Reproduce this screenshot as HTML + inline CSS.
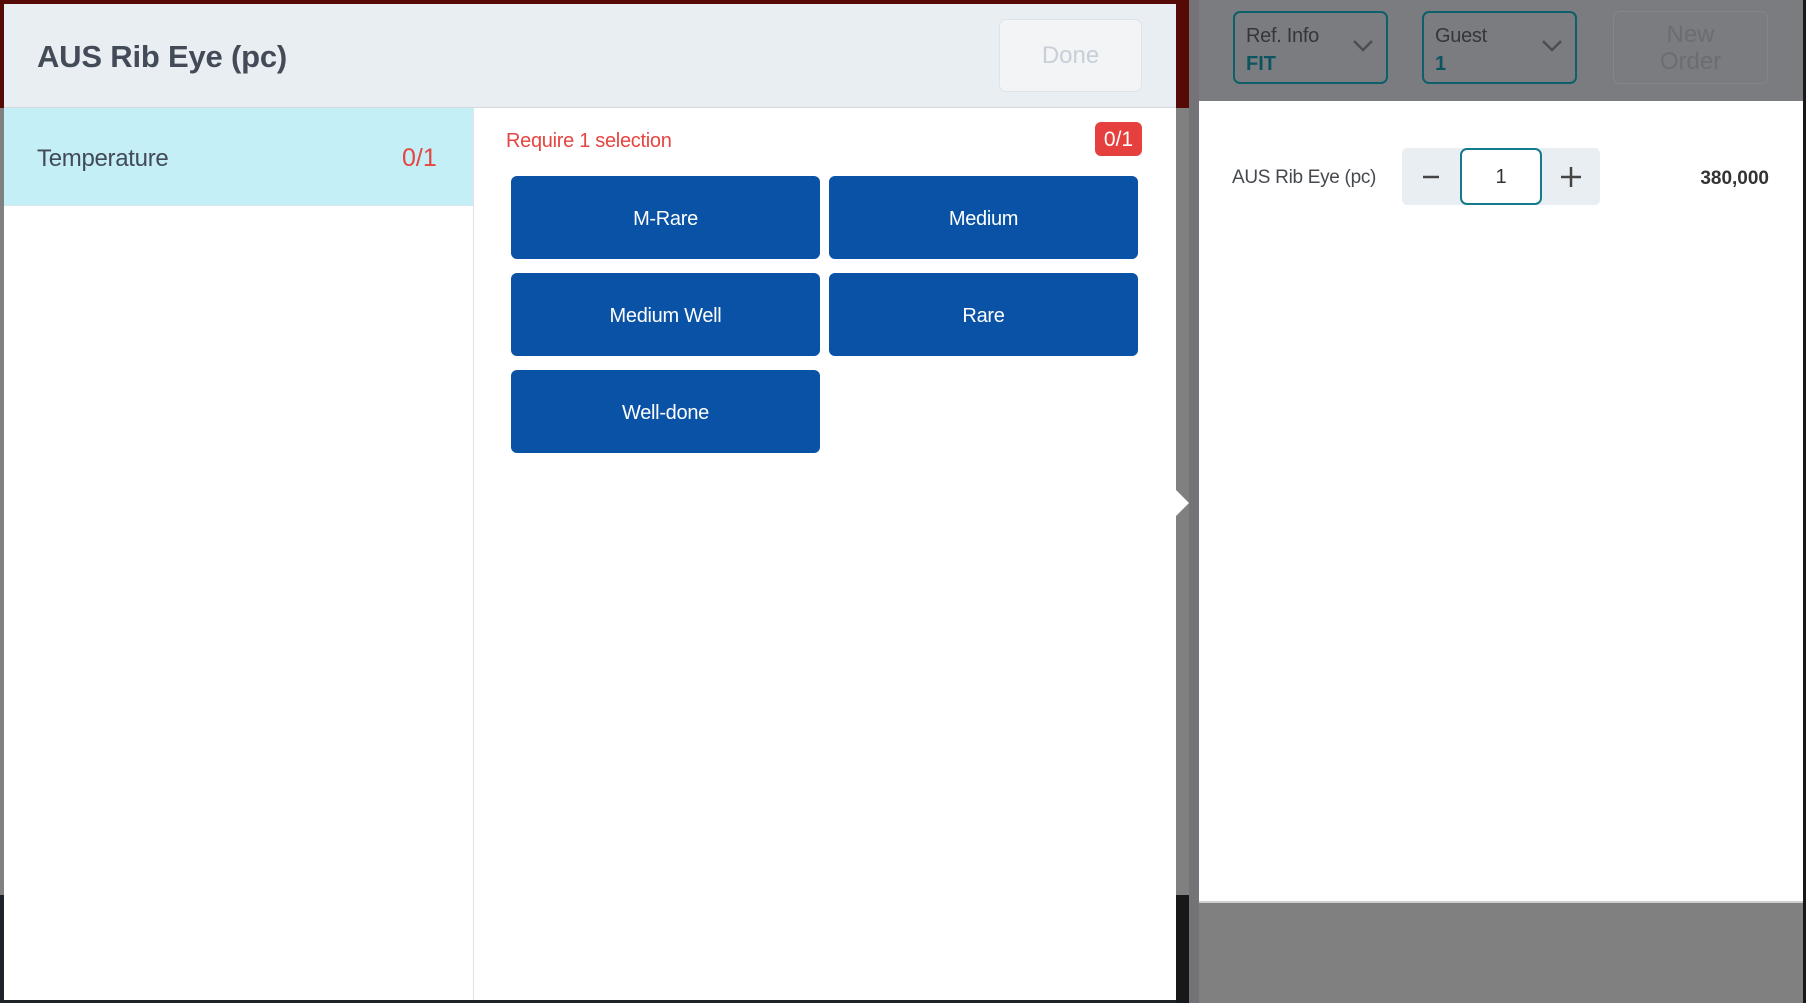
<!DOCTYPE html>
<html><head><meta charset="utf-8"><style>
*{box-sizing:border-box;margin:0;padding:0}
body{width:1806px;height:1003px;position:relative;overflow:hidden;background:#808080;font-family:"Liberation Sans",sans-serif}
.abs{position:absolute}
.btn{position:absolute;background:#0952a5;border-radius:6px;color:#fff;font-size:20px;display:flex;align-items:center;justify-content:center;width:309px;height:83px;padding-top:3px;letter-spacing:-0.3px}
.sel{position:absolute;border:2px solid #0d5f6a;border-radius:7px;width:155px;height:73px;top:11px}
.sel .l1{position:absolute;left:11px;top:12px;font-size:20px;color:#33373b;letter-spacing:-0.3px}
.sel .l2{position:absolute;left:11px;top:40px;font-size:20px;color:#0c5560;font-weight:bold}
.sel svg{position:absolute;right:12px;top:26px}
</style></head><body>
<div class="abs" style="left:0;top:0;width:1189px;height:108px;background:#550a05"></div>
<div class="abs" style="left:0;top:895px;width:1189px;height:108px;background:#1e232a"></div>
<div class="abs" style="left:1176px;top:895px;width:13px;height:108px;background:#18181a"></div>
<div class="abs" style="left:1189px;top:0;width:10px;height:1003px;background:#737378"></div>
<div class="abs" style="left:1199px;top:0;width:607px;height:101px;background:#7b7c80"></div>
<div class="abs" style="left:1199px;top:101px;width:604px;height:802px;background:#fff;border-bottom:2px solid #d0d0d0"></div>
<div class="abs" style="left:1803px;top:0;width:3px;height:1003px;background:#18181a"></div>

<div class="sel" style="left:1233px"><div class="l1">Ref. Info</div><div class="l2">FIT</div>
<svg width="22" height="14" viewBox="0 0 22 14"><path d="M2 2 L11 11 L20 2" fill="none" stroke="#4a4f55" stroke-width="2.5"/></svg></div>
<div class="sel" style="left:1422px"><div class="l1">Guest</div><div class="l2">1</div>
<svg width="22" height="14" viewBox="0 0 22 14"><path d="M2 2 L11 11 L20 2" fill="none" stroke="#4a4f55" stroke-width="2.5"/></svg></div>
<div class="abs" style="left:1613px;top:11px;width:155px;height:73px;border:1.5px solid #858688;border-radius:7px;color:#6b6d70;font-size:24px;text-align:center;line-height:27px;padding-top:9px">New<br>Order</div>

<div class="abs" style="left:1232px;top:167px;font-size:19px;color:#45494e;letter-spacing:-0.3px">AUS Rib Eye (pc)</div>
<div class="abs" style="left:1402px;top:148px;width:198px;height:57px;background:#e9eef2;border-radius:5px"></div>
<div class="abs" style="left:1460px;top:148px;width:82px;height:57px;background:#fff;border:2px solid #157a8c;border-radius:7px;font-size:20px;color:#333;text-align:center;line-height:55px">1</div>
<svg class="abs" style="left:1420px;top:166px" width="22" height="22"><path d="M3 11H19" stroke="#444" stroke-width="2.5"/></svg>
<svg class="abs" style="left:1559px;top:165px" width="24" height="24"><path d="M2 12H22M12 2V22" stroke="#444" stroke-width="2.5"/></svg>
<div class="abs" style="right:37px;top:168px;font-size:19px;color:#333;font-weight:bold">380,000</div>

<div class="abs" style="left:4px;top:4px;width:1172px;height:996px;background:#fff"></div>
<div class="abs" style="left:4px;top:4px;width:1172px;height:104px;background:#e9eef2;border-bottom:1px solid #d3d8dd"></div>
<div class="abs" style="left:37px;top:39px;font-size:31px;color:#424b57;font-weight:bold;letter-spacing:-0.2px">AUS Rib Eye (pc)</div>
<div class="abs" style="left:999px;top:19px;width:143px;height:73px;background:#f2f4f6;border:1.5px solid #dfe3e8;border-radius:7px;color:#c8cfd8;font-size:24px;text-align:center;line-height:72px">Done</div>
<div class="abs" style="left:4px;top:108px;width:470px;height:892px;border-right:1px solid #dfe3e8"></div>
<div class="abs" style="left:4px;top:108px;width:469px;height:98px;background:#c4eff7;border-bottom:1px solid #d8e4e8"></div>
<div class="abs" style="left:37px;top:145px;font-size:24px;color:#424b57;letter-spacing:-0.3px">Temperature</div>
<div class="abs" style="left:402px;top:144px;font-size:25px;color:#e64540">0/1</div>
<div class="abs" style="left:506px;top:130px;font-size:20px;color:#e64540;letter-spacing:-0.3px">Require 1 selection</div>
<div class="abs" style="left:1095px;top:122px;width:47px;height:34px;background:#e5403d;border-radius:6px;color:#fff;font-size:21px;text-align:center;line-height:36px">0/1</div>
<div class="btn" style="left:511px;top:176px">M-Rare</div>
<div class="btn" style="left:829px;top:176px">Medium</div>
<div class="btn" style="left:511px;top:273px">Medium Well</div>
<div class="btn" style="left:829px;top:273px">Rare</div>
<div class="btn" style="left:511px;top:370px">Well-done</div>
<svg class="abs" style="left:1176px;top:490px" width="14" height="26"><path d="M0 0L13 13L0 26Z" fill="#fff"/></svg>
</body></html>
